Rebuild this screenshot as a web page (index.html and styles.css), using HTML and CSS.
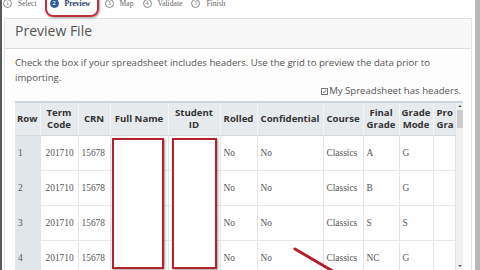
FILE: index.html
```html
<!DOCTYPE html>
<html>
<head>
<meta charset="utf-8">
<link rel="stylesheet" href="styles.css">
</head>
<body>
<div class="page">
  <nav class="steps">
    <div class="step"><span class="num">1</span><span class="lbl">Select</span></div>
    <div class="step active"><span class="num">2</span><span class="lbl">Preview</span></div>
    <div class="step"><span class="num">3</span><span class="lbl">Map</span></div>
    <div class="step"><span class="num">4</span><span class="lbl">Validate</span></div>
    <div class="step"><span class="num">5</span><span class="lbl">Finish</span></div>
  </nav>
  <section class="panel">
    <header class="panel-head">Preview File</header>
    <div class="panel-body">
      <p class="intro">Check the box if your spreadsheet includes headers. Use the grid to preview the data prior to importing.</p>
      <div class="hdr-line"><label class="hdr-check"><span class="cb"><svg viewBox="0 0 8 8" width="7" height="7"><path d="M1.3 4.2 L3.2 6 L6.8 1.8" fill="none" stroke="#333" stroke-width="1.2"/></svg></span>My Spreadsheet has headers.</label></div>
      <div class="grid-wrap">
        <div class="grid-clip">
          <table class="grid">
            <colgroup>
              <col class="c-row"><col class="c-term"><col class="c-crn"><col class="c-name"><col class="c-sid"><col class="c-rolled"><col class="c-conf"><col class="c-course"><col class="c-final"><col class="c-mode"><col class="c-prov">
            </colgroup>
            <thead>
              <tr><th>Row</th><th>Term Code</th><th>CRN</th><th>Full Name</th><th>Student ID</th><th>Rolled</th><th>Confidential</th><th>Course</th><th>Final Grade</th><th>Grade Mode</th><th class="clip">Pro Gra</th></tr>
            </thead>
            <tbody>
              <tr><td class="rn">1</td><td>201710</td><td>15678</td><td></td><td></td><td>No</td><td>No</td><td>Classics</td><td>A</td><td>G</td><td></td></tr>
              <tr><td class="rn">2</td><td>201710</td><td>15678</td><td></td><td></td><td>No</td><td>No</td><td>Classics</td><td>B</td><td>G</td><td></td></tr>
              <tr><td class="rn">3</td><td>201710</td><td>15678</td><td></td><td></td><td>No</td><td>No</td><td>Classics</td><td>S</td><td>S</td><td></td></tr>
              <tr><td class="rn">4</td><td>201710</td><td>15678</td><td></td><td></td><td>No</td><td>No</td><td>Classics</td><td>NC</td><td>G</td><td></td></tr>
            </tbody>
          </table>
        </div>
        <div class="vscroll">
          <span class="arr up"></span>
          <span class="thumb"></span>
          <span class="arr down"></span>
        </div>
        <div class="mark mark-name"></div>
        <div class="mark mark-sid"></div>
        <svg class="arrow" width="70" height="40" viewBox="0 0 70 40"><path d="M2 2 L60 36" stroke="#b3202b" stroke-width="3" stroke-linecap="round" fill="none"/></svg>
      </div>
    </div>
  </section>
</div>
</body>
</html>
```
FILE: styles.css
```css
* { box-sizing: border-box; }
html, body { margin: 0; padding: 0; }
body {
  width: 480px;
  height: 270px;
  overflow: hidden;
  background: #fff;
  font-family: "Open Sans", "Liberation Sans", sans-serif;
}
.page {
  height: 270px;
  overflow: hidden;
  border-left: 2px solid #5a5a5a;
  border-right: 5px solid #b8b8b8;
  background: #fff;
}
.steps {
  display: flex;
  align-items: center;
  height: 27px;
  margin-top: -10px;
  font-family: "Liberation Serif", serif;
  font-size: 7.6px;
  color: #666;
}
.step {
  display: flex;
  align-items: center;
  height: 27px;
  margin-right: 9px;
}
.step .num {
  width: 9px;
  height: 9px;
  border: 1px solid #888;
  border-radius: 50%;
  font-size: 6px;
  line-height: 7px;
  text-align: center;
  margin-right: 6px;
  color: #777;
}
.step:first-child { margin-left: 1px; }
.step.active {
  border: 2px solid #c0303c;
  border-radius: 8px;
  padding: 0 6px 0 3px;
  margin-left: -1px;
  margin-right: 6px;
  box-shadow: 1px 1px 2px rgba(0,0,0,0.35);
}
.step.active .num {
  background: #2f5c9e;
  border-color: #2f5c9e;
  color: #fff;
  font-weight: bold;
}
.step.active .lbl {
  font-weight: bold;
  color: #1d3a66;
}
.panel {
  margin: 1px 3px 0 2px;
  border: 1px solid #e2e2e2;
  background: #fdfdfd;
  height: 260px;
}
.panel-head {
  background: #f7f7f7;
  border-bottom: 1px solid #dcdcdc;
  height: 30px;
  padding: 2px 0 0 10px;
  font-size: 14px;
  line-height: 20px;
  color: #555;
}
.panel-body {
  padding: 6px 8px 0 10px;
}
.intro {
  margin: 0;
  font-size: 9.6px;
  line-height: 15px;
  color: #555;
}
.hdr-line {
  display: flex;
  justify-content: flex-end;
  padding-right: 2px;
  height: 12px;
  line-height: 12px;
}
.hdr-check {
  display: flex;
  align-items: center;
  font-size: 9.6px;
  color: #555;
}
.cb {
  display: inline-flex;
  align-items: center;
  justify-content: center;
  width: 7px;
  height: 7px;
  border: 1px solid #777;
  margin-right: 1px;
  background: #fff;
}
.grid-wrap {
  position: relative;
  margin-top: 4px;
  display: flex;
  width: 448px;
  height: 172px;
  border-top: 2px solid #cfd4d8;
}
.grid-clip {
  width: 440px;
  flex: 0 0 440px;
  overflow: hidden;
}
.grid {
  table-layout: fixed;
  border-collapse: collapse;
  width: 440px;
}
.c-row { width: 25px; }
.c-term { width: 38px; }
.c-crn { width: 32px; }
.c-name { width: 58px; }
.c-sid { width: 52px; }
.c-rolled { width: 37px; }
.c-conf { width: 66px; }
.c-course { width: 40px; }
.c-final { width: 36px; }
.c-mode { width: 34px; }
.c-prov { width: 22px; }
.grid th {
  background: #e7eaed;
  height: 32px;
  font-size: 9.6px;
  line-height: 12px;
  font-weight: bold;
  color: #333;
  text-align: center;
  padding: 0 2px;
  border-left: 1px solid #f4f5f6;
  border-bottom: 1px solid #d6dadd;
  overflow: hidden;
}
.grid th:first-child { border-left: none; }
.grid th.clip { text-align: left; padding-left: 3px; }
.grid td {
  height: 35px;
  font-family: "Liberation Serif", serif;
  font-size: 9.4px;
  color: #555;
  padding: 0 0 0 3px;
  vertical-align: middle;
  border-left: 1px solid #e4e4e4;
  border-bottom: 1px solid #e8e8e8;
  background: #fff;
  white-space: nowrap;
  overflow: hidden;
}
.grid td:nth-child(2) { padding-left: 5px; }
.grid td.rn {
  background: #e1e6ea;
  border-left: none;
  border-bottom-color: #e1e6ea;
}
.vscroll {
  position: relative;
  width: 8px;
  flex: 0 0 8px;
  background: #f1f1f1;
  border-left: 1px solid #e4e4e4;
  display: flex;
  flex-direction: column;
  align-items: center;
}
.arr {
  width: 0;
  height: 0;
  border-left: 2px solid transparent;
  border-right: 2px solid transparent;
}
.arr.up { border-bottom: 2px solid #555; margin-top: 2px; }
.arr.down { border-top: 2px solid #555; margin-top: auto; margin-bottom: 6px; }
.thumb {
  width: 6px;
  height: 18px;
  margin-top: 3px;
  background: #cdcdcd;
}
.mark {
  position: absolute;
  top: 35px;
  height: 131px;
  border: 2px solid #b3222d;
  box-shadow: 1px 1px 2px rgba(0,0,0,0.4);
  background: #fff;
}
.mark-name { left: 97px; width: 52px; }
.mark-sid { left: 157px; width: 45px; }
.arrow {
  position: absolute;
  left: 278px;
  top: 144px;
}
```
